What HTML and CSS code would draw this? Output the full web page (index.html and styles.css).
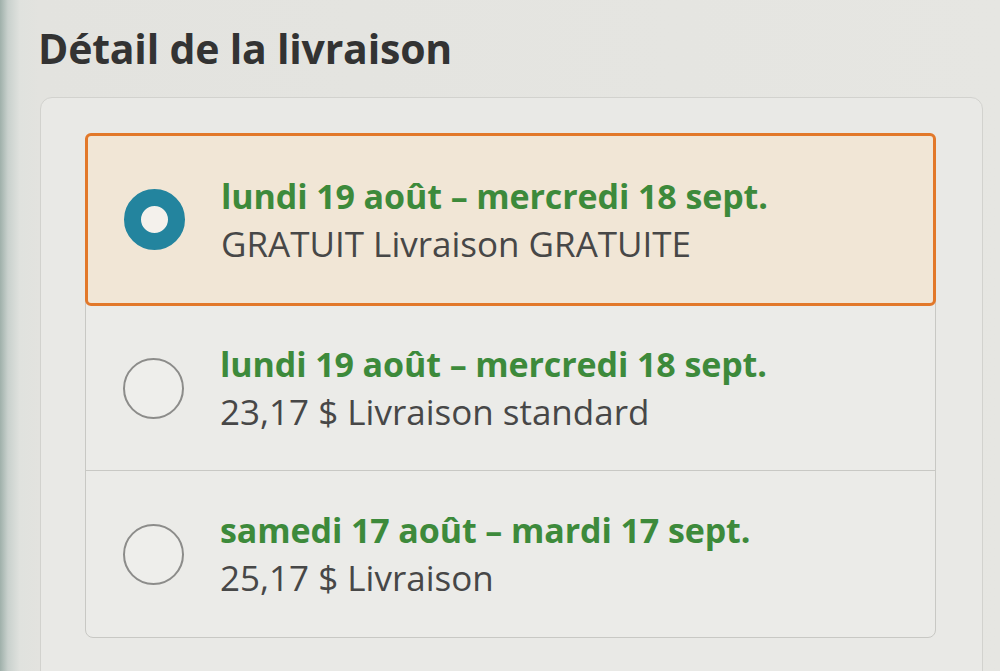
FILE: index.html
```html
<!DOCTYPE html>
<html lang="fr">
<head>
<meta charset="utf-8">
<title>Détail de la livraison</title>
<link rel="stylesheet" href="styles.css">
</head>
<body>
<main class="page">
  <h1 class="title">Détail de la livraison</h1>
  <section class="card">
    <div class="options">
      <div class="option selected">
        <span class="radio checked"></span>
        <div class="text">
          <div class="date">lundi 19 août – mercredi 18 sept.</div>
          <div class="price">GRATUIT Livraison GRATUITE</div>
        </div>
      </div>
      <div class="option">
        <span class="radio"></span>
        <div class="text">
          <div class="date">lundi 19 août – mercredi 18 sept.</div>
          <div class="price">23,17 $ Livraison standard</div>
        </div>
      </div>
      <div class="option">
        <span class="radio"></span>
        <div class="text">
          <div class="date">samedi 17 août – mardi 17 sept.</div>
          <div class="price">25,17 $ Livraison</div>
        </div>
      </div>
    </div>
  </section>
</main>
</body>
</html>
```
FILE: styles.css
```css
html, body {
  margin: 0;
  height: 100%;
}
body {
  background:
    linear-gradient(90deg, #9fb0aa 0px, #c9d1cd 8px, #e0e2de 20px, #e3e3df 40px, #e6e6e2 100%);
  font-family: "Open Sans", "Noto Sans", sans-serif;
  overflow: hidden;
}
.page {
  padding: 24px 0 0 38px;
}
.title {
  margin: 0;
  font-size: 41px;
  font-weight: 700;
  color: #333333;
  line-height: 48px;
  letter-spacing: -0.2px;
}
.card {
  margin: 25px 0 0 2px;
  width: 943px;
  height: 700px;
  box-sizing: border-box;
  border: 1px solid #d2d2ce;
  border-radius: 12px;
  background: #e9e9e6;
  padding: 35px 46px 0 44px;
}
.options {
  border: 1px solid #c8c8c4;
  border-radius: 8px;
  background: #ebebe8;
}
.option {
  display: flex;
  align-items: center;
  box-sizing: border-box;
  height: 165px;
  padding-left: 37px;
  border-bottom: 1px solid #c8c8c4;
}
.option:last-child {
  border-bottom: none;
  height: 166px;
}
.option.selected {
  margin: -1px -1px 0 -1px;
  height: 173px;
  padding-left: 36px;
  border: 3px solid #e2782a;
  border-radius: 6px;
  background: #f1e6d6;
}
.radio {
  flex: none;
  width: 61px;
  height: 61px;
  box-sizing: border-box;
  border: 2px solid #8c8c8a;
  border-radius: 50%;
  background: #eeeeeb;
}
.radio.checked {
  border: 17px solid #23849e;
  background: #f4f1ec;
}
.text {
  margin-left: 36px;
  line-height: 48px;
}
.date {
  font-size: 34px;
  font-weight: 700;
  color: #3d8a3b;
  letter-spacing: -0.1px;
}
.price {
  font-size: 35px;
  color: #474747;
}
```
